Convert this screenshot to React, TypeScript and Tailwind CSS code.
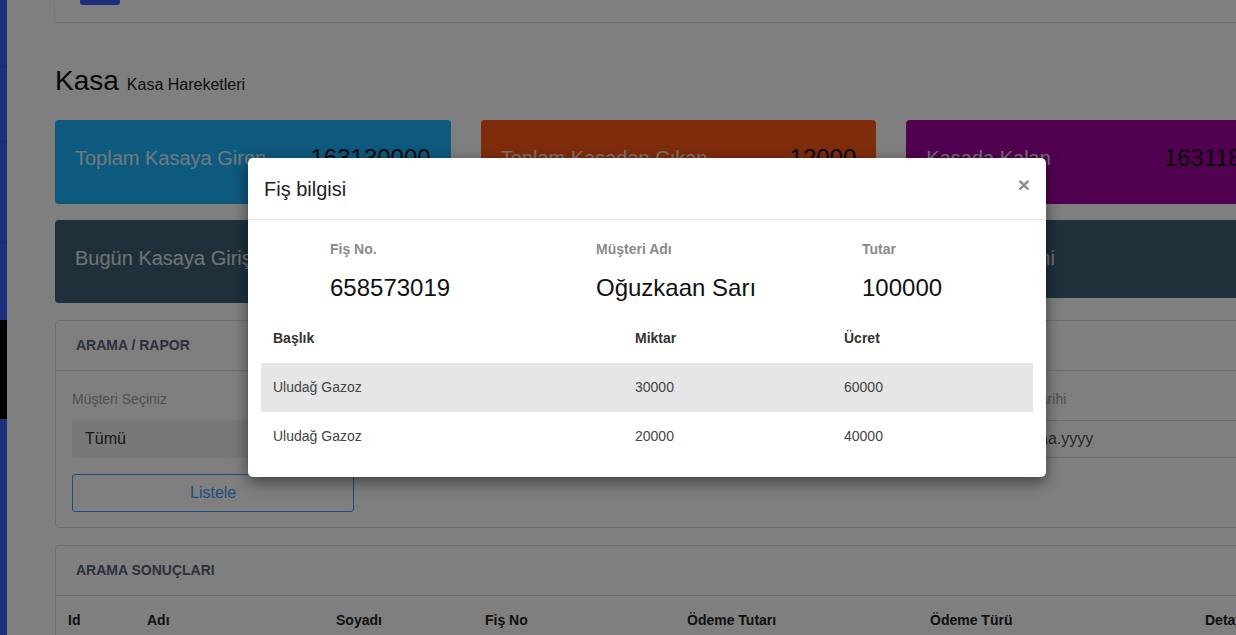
const topCards = [
  { title: 'Toplam Kasaya Giren', value: '163130000', bg: 'bg-[#1cb3fd]' },
  { title: 'Toplam Kasadan Çıkan', value: '12000', bg: 'bg-[#ff5816]' },
  { title: 'Kasada Kalan', value: '163118000', bg: 'bg-[#a400a0]' },
]

const todayCards = [
  { title: 'Bugün Kasaya Giriş', value: '100000', h: 'h-[83px]' },
  { title: 'Bugün Kasadan Çıkış', value: '0', h: 'h-[83px]' },
  { title: 'Kasa Yönetimi', value: '', h: 'h-[78px]' },
]

const receiptLines = [
  { title: 'Uludağ Gazoz', qty: '30000', price: '60000' },
  { title: 'Uludağ Gazoz', qty: '20000', price: '40000' },
]

function Sidebar() {
  return (
    <aside className="w-[7px] shrink-0 flex flex-col">
      <div className="h-[67px] bg-[#3f5efb] border-b border-[#3550d8]" />
      <div className="h-[75px] bg-[#3f5efb] border-b border-[#3550d8]" />
      <div className="h-[101px] bg-[#3f5efb] border-b border-[#3550d8]" />
      <div className="h-[77px] bg-[#3f5efb]" />
      <div className="h-[99px] bg-black" />
      <div className="flex-1 bg-[#3f5efb]" />
    </aside>
  )
}

function StatCard({ title, value, bg, h }: { title: string; value: string; bg: string; h: string }) {
  return (
    <div className={`${bg} ${h} rounded-[4px] px-5 pt-[24px]`}>
      <div className="flex items-center justify-between h-[28px]">
        <span className="text-[20px] text-white/85 whitespace-nowrap">{title}</span>
        <span className="text-[24px] text-[#111]">{value}</span>
      </div>
    </div>
  )
}

function Field({ label, value, filled }: { label: string; value: string; filled?: boolean }) {
  return (
    <div>
      <div className="text-[14px] leading-[20px] text-[#a0a0a0] mb-[11px]">{label}</div>
      <div
        className={`h-[38px] flex items-center px-[13px] text-[16px] ${
          filled ? 'bg-[#f0f0f0] text-[#333] rounded-[3px]' : 'border border-[#d4d4d4] text-[#555]'
        }`}
      >
        {value}
      </div>
    </div>
  )
}

function ReceiptModal() {
  return (
    <div className="absolute left-[248px] top-[158px] w-[798px] bg-white rounded-[5px] shadow-[0_5px_15px_rgba(0,0,0,0.5)]">
      {/* Header */}
      <div className="h-[62px] border-b border-[#e5e5e5] flex items-center justify-between pl-[16px] pr-[16px]">
        <h4 className="text-[20px] text-[#222]">Fiş bilgisi</h4>
        <button className="text-[21px] font-bold leading-none text-[#8c8c8c] mb-[9px]">×</button>
      </div>

      {/* Summary */}
      <div className="grid grid-cols-[266px_266px_184px] pl-[82px] pt-[19px] mb-[12px]">
        {[
          ['Fiş No.', '658573019'],
          ['Müşteri Adı', 'Oğuzkaan Sarı'],
          ['Tutar', '100000'],
        ].map(([label, value]) => (
          <div key={label}>
            <div className="text-[14px] leading-[20px] font-bold text-[#8a8a8a]">{label}</div>
            <div className="mt-[15px] text-[24px] leading-[28px] text-[#111]">{value}</div>
          </div>
        ))}
      </div>

      {/* Lines */}
      <div className="mx-[13px] pb-[16px]">
        <table className="w-full table-fixed border-collapse">
          <colgroup>
            <col className="w-[362px]" />
            <col className="w-[209px]" />
            <col className="w-[201px]" />
          </colgroup>
          <thead>
            <tr>
              <th className="h-[49px] px-[12px] text-left text-[14px] font-bold text-[#333]">Başlık</th>
              <th className="h-[49px] px-[12px] text-left text-[14px] font-bold text-[#333]">Miktar</th>
              <th className="h-[49px] px-[12px] text-left text-[14px] font-bold text-[#333]">Ücret</th>
            </tr>
          </thead>
          <tbody>
            {receiptLines.map((line, i) => (
              <tr key={i} className={i % 2 === 0 ? 'bg-[#e6e6e6]' : ''}>
                <td className="h-[49px] px-[12px] text-[14px] text-[#444]">{line.title}</td>
                <td className="h-[49px] px-[12px] text-[14px] text-[#444]">{line.qty}</td>
                <td className="h-[49px] px-[12px] text-[14px] text-[#444]">{line.price}</td>
              </tr>
            ))}
          </tbody>
        </table>
      </div>
    </div>
  )
}

export default function App() {
  return (
    <div className="relative w-[1236px] h-[635px] overflow-hidden bg-white font-['Liberation_Sans',Arial,sans-serif] text-[#333]">
      <div className="flex h-full">
        <Sidebar />
        <main className="flex-1 min-w-0 pl-[48px]">
          <div className="w-[1247px]">
            {/* Top bar */}
            <div className="h-[22px] bg-white shadow-[0_1px_2px_rgba(0,0,0,0.18)] pl-[25px]">
              <div className="w-[40px] h-[5px] bg-[#3f5efb] rounded-b-[3px]" />
            </div>

            {/* Title */}
            <div className="mt-[43px] flex items-baseline gap-[8px]">
              <h1 className="text-[28px] leading-[31px] text-[#111]">Kasa</h1>
              <span className="text-[16px] text-[#222]">Kasa Hareketleri</span>
            </div>

            {/* Totals */}
            <div className="mt-[23px] grid grid-cols-3 gap-[30px]">
              {topCards.map((c) => (
                <StatCard key={c.title} {...c} h="h-[84px]" />
              ))}
            </div>
            <div className="mt-4 grid grid-cols-3 gap-[30px] items-start">
              {todayCards.map((c) => (
                <StatCard key={c.title} {...c} bg="bg-[#3e6076]" />
              ))}
            </div>

            {/* Search */}
            <section className="mt-[17px] border border-[#dcdcdc] rounded-[4px]">
              <div className="h-[50px] border-b border-[#dcdcdc] flex items-center pl-[20px]">
                <h3 className="text-[14px] font-bold uppercase text-[#58607a]">Arama / Rapor</h3>
              </div>
              <div className="px-[16px] pt-[18px] pb-[15px] grid grid-cols-4 gap-x-[28px]">
                <div>
                  <Field label="Müşteri Seçiniz" value="Tümü" filled />
                  <button className="mt-[16px] w-full h-[38px] border border-[#3b9cff] rounded-[3px] text-[16px] text-[#3b9cff]">
                    Listele
                  </button>
                </div>
                <Field label="Ödeme Türü" value="Tümü" filled />
                <Field label="Başlangıç Tarihi" value="gg.aa.yyyy" />
                <Field label="Bitiş Tarihi" value="gg.aa.yyyy" />
              </div>
            </section>

            {/* Results */}
            <section className="mt-[17px] border border-[#dcdcdc] rounded-[4px]">
              <div className="h-[50px] border-b border-[#dcdcdc] flex items-center pl-[20px]">
                <h3 className="text-[14px] font-bold uppercase text-[#58607a]">Arama Sonuçları</h3>
              </div>
              <div className="grid grid-cols-[79px_189px_149px_202px_243px_275px_1fr] pl-[12px] py-[14px] text-[14px] leading-[20px] font-bold text-[#222]">
                <span>Id</span>
                <span>Adı</span>
                <span>Soyadı</span>
                <span>Fiş No</span>
                <span>Ödeme Tutarı</span>
                <span>Ödeme Türü</span>
                <span>Detay</span>
              </div>
            </section>
          </div>
        </main>
      </div>

      <div className="absolute inset-0 bg-black/50" />
      <ReceiptModal />
    </div>
  )
}
